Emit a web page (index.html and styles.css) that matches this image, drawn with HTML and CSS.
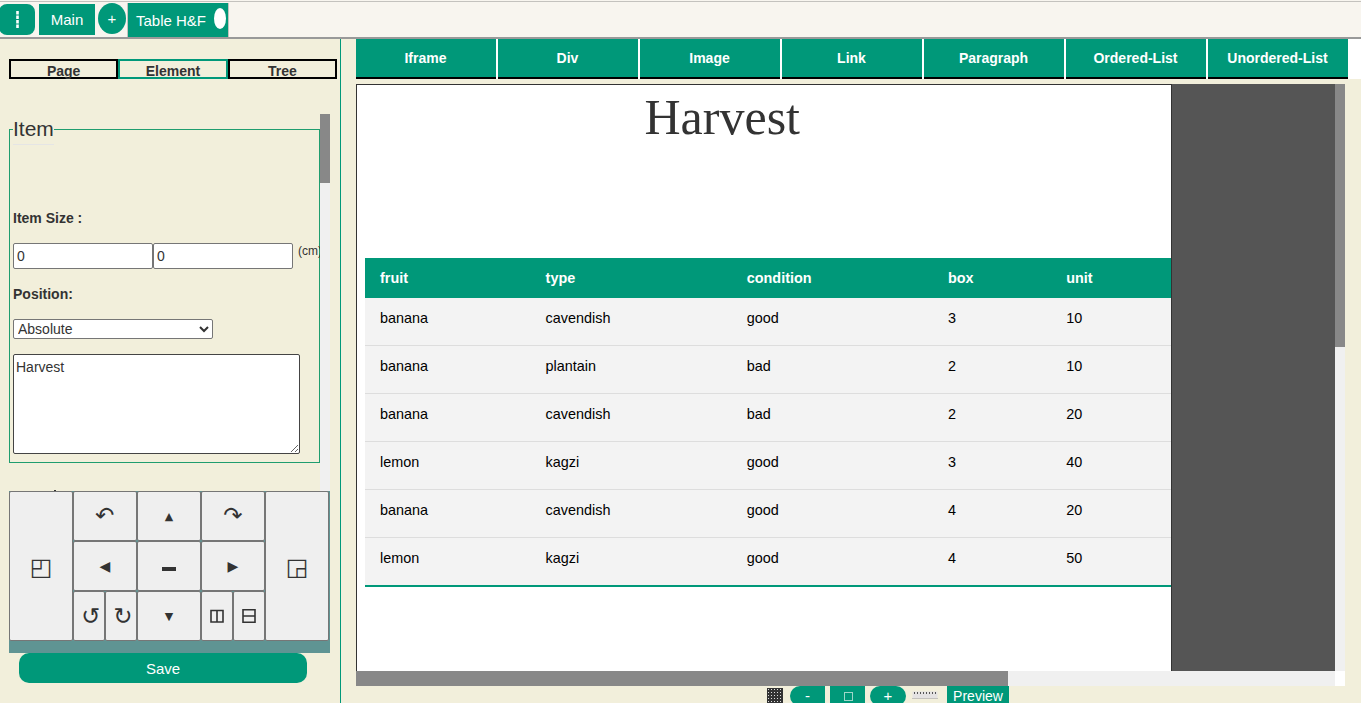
FILE: index.html
```html
<!DOCTYPE html>
<html lang="en">
<head>
<meta charset="utf-8">
<title>Table H&amp;F</title>
<link rel="stylesheet" href="styles.css">
</head>
<body>
<header class="topbar">
  <button class="tab menu"><svg width="3" height="17" viewBox="0 0 3 17"><path d="M1.5 0v17" stroke="#fff" stroke-width="2.6" stroke-dasharray="3.5 1" fill="none"/></svg></button>
  <button class="tab main-tab">Main</button>
  <button class="tab add">+</button>
  <div class="doc"><button class="tab doc-tab">Table H&amp;F</button><span class="close"></span></div>
</header>
<div class="workspace">
  <aside class="side">
    <nav class="modes"><a class="mode">Page</a><a class="mode active">Element</a><a class="mode">Tree</a></nav>
    <div class="scroller">
      <div class="form">
        <fieldset class="group">
          <legend class="legend">Item</legend>
          <label class="label size-label">Item Size :</label>
          <div class="sizes"><input class="field" value="0"><input class="field" value="0"><span class="cm">(cm)</span></div>
          <label class="label">Position:</label>
          <select class="select"><option>Absolute</option></select>
          <textarea class="text" spellcheck="false">Harvest</textarea>
        </fieldset>
        <div class="next-peek"></div>
      </div>
      <div class="track"><div class="thumb"></div></div>
    </div>
    <div class="keypad">
      <button class="key tall big">◰</button>
      <button class="key arc">↶</button>
      <button class="key small">▲</button>
      <button class="key arc">↷</button>
      <button class="key tall big">◲</button>
      <button class="key">◀</button>
      <button class="key"><span class="bar"></span></button>
      <button class="key">▶</button>
      <div class="pair"><button class="key arc turn">↺</button><button class="key arc turn">↻</button></div>
      <button class="key small">▼</button>
      <div class="pair">
        <button class="key"><svg width="14" height="14" viewBox="0 0 14 14"><path d="M1 1.5h12v11.5H1zM7 1.5v11.5" fill="none" stroke="#333" stroke-width="1.6"/></svg></button>
        <button class="key"><svg width="14" height="14" viewBox="0 0 14 14"><path d="M1 .8h12v12.4H1zM1 7h12" fill="none" stroke="#333" stroke-width="1.6"/></svg></button>
      </div>
    </div>
    <button class="save">Save</button>
  </aside>
  <main class="editor">
    <nav class="tools"><a class="tool">Iframe</a><a class="tool">Div</a><a class="tool">Image</a><a class="tool">Link</a><a class="tool">Paragraph</a><a class="tool">Ordered-List</a><a class="tool">Unordered-List</a></nav>
    <div class="stage">
      <div class="canvas">
        <section class="sheet">
          <h1 class="title">Harvest</h1>
          <table class="data">
            <colgroup><col class="c1"><col class="c2"><col class="c3"><col class="c4"><col class="c5"></colgroup>
            <thead><tr><th>fruit</th><th>type</th><th>condition</th><th>box</th><th>unit</th></tr></thead>
            <tbody>
              <tr><td>banana</td><td>cavendish</td><td>good</td><td>3</td><td>10</td></tr>
              <tr><td>banana</td><td>plantain</td><td>bad</td><td>2</td><td>10</td></tr>
              <tr><td>banana</td><td>cavendish</td><td>bad</td><td>2</td><td>20</td></tr>
              <tr><td>lemon</td><td>kagzi</td><td>good</td><td>3</td><td>40</td></tr>
              <tr><td>banana</td><td>cavendish</td><td>good</td><td>4</td><td>20</td></tr>
              <tr><td>lemon</td><td>kagzi</td><td>good</td><td>4</td><td>50</td></tr>
            </tbody>
          </table>
        </section>
      </div>
      <div class="vtrack"><div class="vthumb"></div></div>
      <div class="htrack"><div class="hthumb"></div></div>
      <div class="corner"></div>
    </div>
    <footer class="footer">
      <span class="dots"></span>
      <button class="zoom out">-</button>
      <button class="zoom fit"><span class="square"></span></button>
      <button class="zoom in">+</button>
      <svg class="ruler" width="26" height="9" viewBox="0 0 26 9"><path d="M.5 .5h25v7H.5z" fill="#e4e2e2"/><path d="M0 7.5h26" stroke="#c3c1bd"/><path d="M2 2h22" stroke="#555" stroke-width="2" stroke-dasharray="1 2"/></svg>
      <button class="preview">Preview</button>
    </footer>
  </main>
</div>
</body>
</html>
```
FILE: styles.css
```css
* { box-sizing: border-box; }
body {
  margin: 0;
  width: 1361px;
  height: 703px;
  overflow: hidden;
  background: #f2efdb;
  color: #333;
  font: 14px/20px "Liberation Sans", Arial, sans-serif;
}
button { margin: 0; padding: 0; border: 0; font-family: inherit; color: inherit; }

/* Top bar */
.topbar {
  display: flex;
  align-items: flex-start;
  height: 39px;
  padding-top: 1px;
  border-bottom: 2px solid #999;
  background: linear-gradient(#f8f5ef 1px, #c4c2be 1px, #c4c2be 2px, #f8f5ef 2px);
}
.tab { background: #009879; color: #fff; font-size: 15px; }
.menu { display: flex; align-items: center; justify-content: center; width: 36px; height: 31px; margin: 3px 0 0 -1px; border-radius: 8px; }
.main-tab { width: 56px; height: 31px; margin: 3px 0 0 4px; }
.add { width: 28px; height: 31px; margin: 2px 1px 0 3px; border-radius: 50%; }
.doc { display: flex; margin-top: 2px; border: 1px solid #c4c2be; border-bottom: 0; border-top: 0; height: 34px; width: 102px; background: #009879; }
.doc-tab { width: 85px; height: 34px; padding: 1px 0 0 1px; }
.close { width: 12px; height: 21px; margin: 5px 0 0 1px; border-radius: 50%; background: #fff; }

.workspace { display: flex; height: 664px; }

/* Left panel */
.side { width: 341px; flex: none; padding: 20px 0 0 9px; border-right: 1px solid #009879; }
.modes { display: flex; width: 328px; height: 20px; }
.mode { flex: 1; height: 20px; border: 2px solid #000; text-align: center; font-weight: bold; }
.mode.active { border-color: #009879; }
.scroller { display: flex; width: 321px; height: 377px; margin-top: 35px; overflow: hidden; }
.form { width: 311px; overflow: hidden; }
.track { width: 10px; background: #f0f0f0; }
.thumb { height: 69px; background: #888; }
.group { display: block; min-width: 0; width: 311px; height: 349px; margin: 0; padding: 0 3px; border: 1px solid #1f9d6e; }
.legend { height: 31px; padding: 0; border-bottom: 1px solid #e5e5e5; font-size: 21px; line-height: 30px; }
.label { display: block; font-weight: bold; }
.size-label { margin-top: 63px; }
.sizes { display: flex; margin: 15px 0; height: 26px; }
.field { width: 140px; height: 26px; flex: none; padding: 1px 3px; border: 1px solid #767676; border-radius: 2px; font: 14px "Liberation Sans", Arial, sans-serif; color: #333; background: #fff; }
.cm { margin-left: 5px; font-size: 12px; line-height: 16px; }
.select { display: block; width: 200px; height: 20px; margin: 15px 0; padding: 0; border: 1px solid #767676; border-radius: 2px; background-color: #fff; color: #333; font: 14px "Liberation Sans", Arial, sans-serif; }
.text { display: block; width: 287px; height: 100px; margin: 0; padding: 2px; border: 1px solid #444; border-radius: 2px; color: #333; font: 14px/20px "Liberation Sans", Arial, sans-serif; }
.next-peek { width: 2px; height: 1px; margin: 27px 0 0 45px; background: #333; }

/* Keypad */
.keypad {
  display: grid;
  grid-template-columns: repeat(5, 64px);
  grid-template-rows: repeat(3, 50px);
  width: 321px;
  height: 162px;
  background: #5f9493;
}
.key { display: flex; flex: 1; align-items: center; justify-content: center; border: 1px solid #767676; border-radius: 2px; background: #efefef; font: 14px "DejaVu Sans", sans-serif; }
.small { font-size: 11px; }
.tall { grid-row: span 3; }
.big { padding-top: 1px; font-size: 24px; }
.arc { font-size: 23px; padding-bottom: 3px; }
.turn { padding: 0 0 1px 4px; }
.pair { display: flex; }
.bar { width: 14px; height: 4px; margin-top: 5px; background: #333; }
.save { display: block; width: 288px; height: 30px; margin-left: 10px; border-radius: 10px; background: #009879; color: #fff; font-size: 15px; }

/* Editor */
.editor { flex: 1; padding-left: 15px; }
.tools { display: flex; gap: 2px; height: 40px; background: #fff; }
.tool { width: 140px; height: 40px; padding-right: 1px; border-bottom: 2px solid #000; background: #009879; color: #fff; font-weight: bold; line-height: 38px; text-align: center; }
.stage { display: grid; grid-template: 587px 15px / 979px 10px; margin-top: 5px; }
.canvas { background: #555; overflow: hidden; }
.sheet { width: 816px; height: 1056px; padding-left: 8px; border: 1px solid #333; background: #fff; overflow: hidden; }
.title { height: 173px; margin: 0 0 0 279.5px; font: 50px/64px "Liberation Serif", "Times New Roman", serif; }
.data { width: 820px; table-layout: fixed; border-collapse: collapse; color: #000; font-size: 14.4px; }
.c1 { width: 165.6px; }
.c2 { width: 201.2px; }
.c3 { width: 201.2px; }
.c4 { width: 118.2px; }
.data th { height: 40px; padding: 0 15px; background: #009879; color: #fff; text-align: left; }
.data td { height: 48px; padding: 10px 15px 17px; border-bottom: 1px solid #ddd; background: #f3f3f3; vertical-align: top; }
.data tbody tr:first-child td { height: 47px; padding-bottom: 16px; }
.data tr:last-child td { border-bottom: 2px solid #009879; }
.vtrack, .htrack { background: #f0f0f0; }
.vthumb { height: 263px; background: #888; }
.hthumb { width: 652px; height: 15px; background: #888; }
.corner { background: #fff; }

/* Footer controls */
.footer { display: flex; align-items: flex-start; height: 17px; padding-left: 411px; overflow: hidden; }
.dots { width: 16px; height: 16px; margin: 2px 7px 0 0; background: radial-gradient(circle, #ddd 0.6px, #333 1px) 0 0 / 3px 3px #333; }
.zoom { display: flex; align-items: center; justify-content: center; width: 35px; height: 20px; margin-right: 5px; background: #009879; color: #fff; font-size: 15px; }
.out { padding-bottom: 1px; border-radius: 12px 0 0 12px; }
.in { width: 36px; padding-bottom: 1px; border-radius: 12px; }
.square { width: 9px; height: 9px; border: 1px solid #9fd6c9; margin: 1px 0 0 1px; }
.ruler { margin: 5px 9px 0 1px; }
.preview { width: 62px; height: 20px; background: #009879; color: #fff; font-size: 14px; }
```
